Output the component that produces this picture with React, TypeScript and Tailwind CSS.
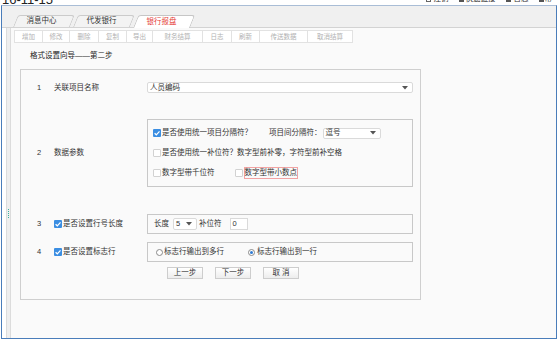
import type { ReactNode } from "react";

const TOOLS: { label: string; w: string }[] = [
  { label: "增加", w: "w-[29px]" },
  { label: "修改", w: "w-[28px]" },
  { label: "删除", w: "w-[30px]" },
  { label: "复制", w: "w-[29px]" },
  { label: "导出", w: "w-[27px]" },
  { label: "财务结算", w: "w-[51px]" },
  { label: "日志", w: "w-[30px]" },
  { label: "刷新", w: "w-[29px]" },
  { label: "传送数据", w: "w-[49px]" },
  { label: "取消结算", w: "w-[46px]" },
];

function Check({ on }: { on?: boolean }) {
  if (!on) {
    return <span className="h-[8px] w-[8px] shrink-0 rounded-[1px] border border-[#d2d2d2] bg-white" />;
  }
  return (
    <span className="flex h-[8px] w-[8px] shrink-0 items-center justify-center rounded-[1px] bg-[#3b8ee2]">
      <svg viewBox="0 0 8 8" className="h-[8px] w-[8px]">
        <path d="M1.6 4.2 3.3 5.8 6.5 2.3" fill="none" stroke="#fff" strokeWidth="1.2" />
      </svg>
    </span>
  );
}

function Radio({ on }: { on?: boolean }) {
  return (
    <span className="flex h-[7px] w-[7px] shrink-0 items-center justify-center rounded-full border border-[#8a8a8a] bg-white">
      {on && <span className="h-[3px] w-[3px] rounded-full bg-[#2f7bd3]" />}
    </span>
  );
}

function Arrow() {
  return (
    <svg viewBox="0 0 6 4" className="h-[4px] w-[6px] shrink-0">
      <path d="M0 0h6L3 3.6z" fill="#555" />
    </svg>
  );
}

function Select({ value, className }: { value: string; className: string }) {
  return (
    <div
      className={
        "flex items-center justify-between rounded-[2px] border border-[#dadada] bg-white pl-[2px] pr-[4px] " +
        className
      }
    >
      <span>{value}</span>
      <Arrow />
    </div>
  );
}

function Tab({ label, active }: { label: string; active?: boolean }) {
  return (
    <div className={"relative flex h-[12px] w-[57px] items-center justify-center " + (active ? "-mb-px h-[13px]" : "")}>
      <span
        className={[
          "absolute inset-0 origin-bottom -skew-x-[22deg] rounded-t-[3px] border border-b-0",
          active ? "border-[#c6c6c6] bg-white" : "border-[#cbcbcb] bg-[#f3f3f3]",
        ].join(" ")}
      />
      <span className={"relative " + (active ? "text-[#e5403a]" : "text-[#333]")}>{label}</span>
    </div>
  );
}

function Row({ num, label, children, className }: { num: string; label: ReactNode; children: ReactNode; className?: string }) {
  return (
    <div className={"flex items-center pl-[16px] " + (className ?? "")}>
      <span className="w-[17px] shrink-0">{num}</span>
      <div className="flex w-[93px] shrink-0 items-center">{label}</div>
      {children}
    </div>
  );
}

export default function App() {
  return (
    <div className="relative h-[340px] w-[558px] overflow-hidden bg-white font-['Liberation_Sans','Noto_Sans_CJK_SC',sans-serif] text-[7.5px] leading-[10px] text-[#333]">
      {/* clipped header strip */}
      <div className="flex h-[5px] items-start justify-between pl-[2px] pr-[6px]">
        <span className="-mt-[7px] text-[13px] leading-[13px] text-[#222]">16-11-15</span>
        <div className="-mt-[6px] flex items-center text-[#333]">
          <span className="mr-[3px] h-[6px] w-[5px] border border-[#666]" />
          <span className="mr-[10px]">注销</span>
          <span className="mr-[2px] h-[5px] w-[5px] bg-[#555]" />
          <span className="mr-[10px]">快速链接</span>
          <span className="mr-[3px] h-[5px] w-[5px] bg-[#555]" />
          <span className="mr-[10px]">日志</span>
          <span className="mr-[1px] h-[5px] w-[5px] bg-[#555]" />
          <span>帮</span>
        </div>
      </div>

      <div className="mx-[1px] flex h-[334px] flex-col border border-[#4a7dba] border-t-[#a9bdd6]">
        {/* tab bar */}
        <div className="flex h-[22px] shrink-0 items-end gap-[3px] border-b border-[#d3d3d3] bg-[#f0f0f0] pl-[11px]">
          <Tab label="消息中心" />
          <Tab label="代发银行" />
          <Tab label="银行报盘" active />
        </div>

        <div className="flex flex-1">
          <div className="w-[4px] shrink-0 bg-white" />
          <div className="flex w-[5px] shrink-0 flex-col items-center border-x border-[#dcdcdc] bg-[#eeeeee] pt-[181px]">
            <span className="h-[9px] w-[1px] border-l border-dotted border-[#3bb3a0]" />
          </div>

          <div className="flex flex-1 flex-col bg-[#fafafa]">
            {/* toolbar */}
            <div className="ml-[3px] mt-[2px] flex h-[13px]">
              {TOOLS.map((t, i) => (
                <div
                  key={t.label}
                  className={[
                    "flex items-center justify-center border border-[#e2e2e2] bg-white text-[6.5px] text-[#b2b2b2]",
                    t.w,
                    i > 0 ? "-ml-px" : "",
                  ].join(" ")}
                >
                  {t.label}
                </div>
              ))}
            </div>

            <div className="ml-[19px] mt-[8px] text-[#222]">格式设置向导——第二步</div>

            {/* wizard panel */}
            <div className="ml-[9px] mt-[8px] flex h-[231px] w-[401px] flex-col border border-[#cfcfcf] pt-[12px]">
              <Row num="1" label="关联项目名称">
                <Select value="人员编码" className="h-[11px] w-[266px]" />
              </Row>

              <Row num="2" label="数据参数" className="mt-[26px]">
                <div className="flex h-[68px] w-[266px] flex-col gap-[10px] border border-[#c8c8c8] pl-[5px] pt-[8px]">
                  <div className="flex h-[10px] items-center gap-[1px]">
                    <Check on />
                    <span>是否使用统一项目分隔符？</span>
                    <span className="ml-[16px]">项目间分隔符：</span>
                    <Select value="逗号" className="h-[11px] w-[58px]" />
                  </div>
                  <div className="flex h-[10px] items-center gap-[1px]">
                    <Check />
                    <span>是否使用统一补位符？数字型前补零，字符型前补空格</span>
                  </div>
                  <div className="flex h-[10px] items-center gap-[1px]">
                    <Check />
                    <span>数字型带千位符</span>
                    <span className="ml-[18px]" />
                    <Check />
                    <span className="flex h-[12px] items-center border border-[#f2a3a3]">数字型带小数点</span>
                  </div>
                </div>
              </Row>

              <Row
                num="3"
                className="mt-[27px]"
                label={
                  <div className="flex items-center gap-[1px]">
                    <Check on />
                    <span>是否设置行号长度</span>
                  </div>
                }
              >
                <div className="flex h-[20px] w-[266px] items-center border border-[#c8c8c8] pl-[6px]">
                  <span>长度</span>
                  <Select value="5" className="ml-[4px] h-[12px] w-[24px]" />
                  <span className="ml-[2px]">补位符</span>
                  <div className="ml-[8px] flex h-[12px] w-[18px] items-center border border-[#dadada] bg-white pl-[2px]">0</div>
                </div>
              </Row>

              <Row
                num="4"
                className="mt-[8px]"
                label={
                  <div className="flex items-center gap-[1px]">
                    <Check on />
                    <span>是否设置标志行</span>
                  </div>
                }
              >
                <div className="flex h-[20px] w-[266px] items-center border border-[#c8c8c8] pl-[8px]">
                  <Radio />
                  <span className="ml-[1px]">标志行输出到多行</span>
                  <span className="ml-[24px]" />
                  <Radio on />
                  <span className="ml-[2px]">标志行输出到一行</span>
                </div>
              </Row>

              <div className="ml-[146px] mt-[5px] flex gap-[12px]">
                {["上一步", "下一步", "取 消"].map((b) => (
                  <button
                    key={b}
                    className="flex h-[12px] w-[36px] items-center justify-center border border-[#cdcdcd] bg-gradient-to-b from-white to-[#ededed] text-[#333]"
                  >
                    {b}
                  </button>
                ))}
              </div>
            </div>
          </div>
        </div>
      </div>
    </div>
  );
}
